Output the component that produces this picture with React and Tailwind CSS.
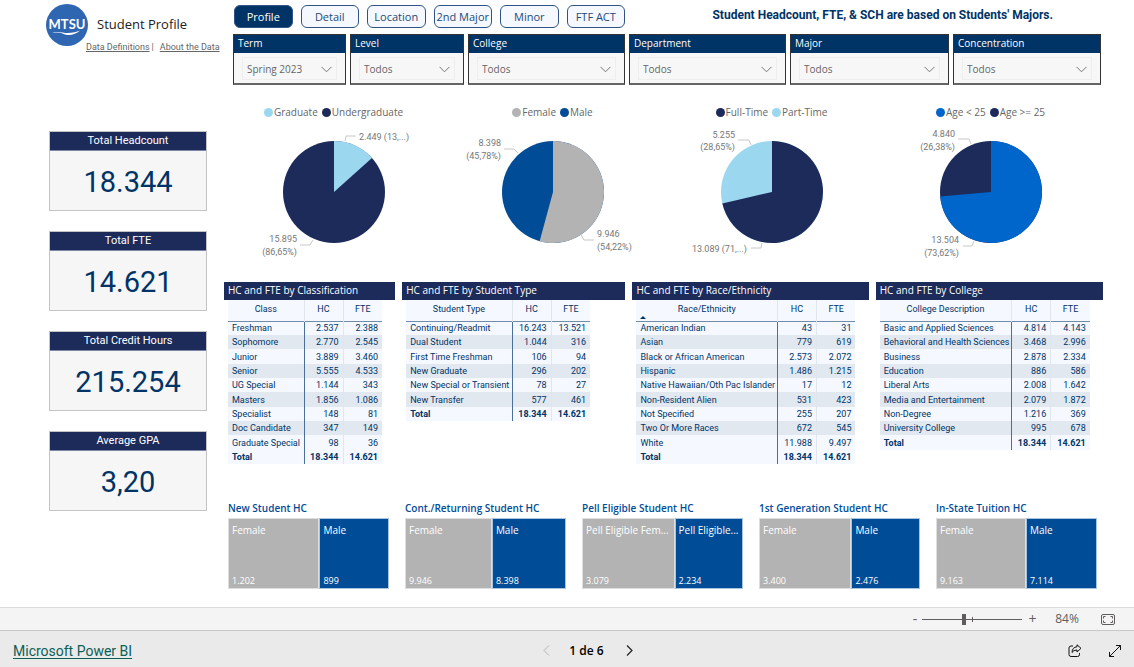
import React, { useState } from 'react';

const tabs = ['Profile', 'Detail', 'Location', '2nd Major', 'Minor', 'FTF ACT'];

const filtros = [
    { label: 'Term', value: 'Spring 2023' },
    { label: 'Level', value: 'Todos' },
    { label: 'College', value: 'Todos' },
    { label: 'Department', value: 'Todos' },
    { label: 'Major', value: 'Todos' },
    { label: 'Concentration', value: 'Todos' }
];

const cards = [
    { label: 'Total Headcount', value: '18.344' },
    { label: 'Total FTE', value: '14.621' },
    { label: 'Total Credit Hours', value: '215.254' },
    { label: 'Average GPA', value: '3,20' }
];

const pies = [
    {
        share: 0.1335,
        slices: [
            { name: 'Graduate', color: '#9bd8ef' },
            { name: 'Undergraduate', color: '#1d2b5b' }
        ],
        lines: ['121,22 122,17 132,17', '89,121 86,126 76,126'],
        texts: [
            { x: 135, y: 21, t: '2.449 (13,...)' },
            { x: 73, y: 123, end: true, t: '15.895' },
            { x: 73, y: 136, end: true, t: '(86,65%)' }
        ]
    },
    {
        share: 0.5422,
        slices: [
            { name: 'Female', color: '#b3b3b3' },
            { name: 'Male', color: '#004c97' }
        ],
        lines: ['75,34 71,30 61,30', '138,116 141,121 151,121'],
        texts: [
            { x: 58, y: 27, end: true, t: '8.398' },
            { x: 58, y: 40, end: true, t: '(45,78%)' },
            { x: 154, y: 118, t: '9.946' },
            { x: 154, y: 131, t: '(54,22%)' }
        ]
    },
    {
        share: 0.7135,
        slices: [
            { name: 'Full-Time', color: '#1d2b5b' },
            { name: 'Part-Time', color: '#9bd8ef' }
        ],
        lines: ['89,26 87,21 76,21', '100,124 99,129 89,129'],
        texts: [
            { x: 73, y: 19, end: true, t: '5.255' },
            { x: 73, y: 31, end: true, t: '(28,65%)' },
            { x: 85, y: 133, end: true, t: '13.089 (71,...)' }
        ]
    },
    {
        share: 0.7362,
        slices: [
            { name: 'Age < 25', color: '#0066cc' },
            { name: 'Age >= 25', color: '#1d2b5b' }
        ],
        lines: ['90,25 88,20 77,20', '93,122 91,127 82,127'],
        texts: [
            { x: 74, y: 18, end: true, t: '4.840' },
            { x: 74, y: 31, end: true, t: '(26,38%)' },
            { x: 78, y: 124, end: true, t: '13.504' },
            { x: 78, y: 137, end: true, t: '(73,62%)' }
        ]
    }
];

const tabelas = [
    {
        titulo: 'HC and FTE by Classification',
        coluna: 'Class',
        largura: 'w-[154px]',
        linhas: [
            ['Freshman', '2.537', '2.388'],
            ['Sophomore', '2.770', '2.545'],
            ['Junior', '3.889', '3.460'],
            ['Senior', '5.555', '4.533'],
            ['UG Special', '1.144', '343'],
            ['Masters', '1.856', '1.086'],
            ['Specialist', '148', '81'],
            ['Doc Candidate', '347', '149'],
            ['Graduate Special', '98', '36']
        ]
    },
    {
        titulo: 'HC and FTE by Student Type',
        coluna: 'Student Type',
        largura: 'w-[184px]',
        linhas: [
            ['Continuing/Readmit', '16.243', '13.521'],
            ['Dual Student', '1.044', '316'],
            ['First Time Freshman', '106', '94'],
            ['New Graduate', '296', '202'],
            ['New Special or Transient', '78', '27'],
            ['New Transfer', '577', '461']
        ]
    },
    {
        titulo: 'HC and FTE by Race/Ethnicity',
        coluna: 'Race/Ethnicity',
        ordenada: true,
        largura: 'w-[219px]',
        linhas: [
            ['American Indian', '43', '31'],
            ['Asian', '779', '619'],
            ['Black or African American', '2.573', '2.072'],
            ['Hispanic', '1.486', '1.215'],
            ['Native Hawaiian/Oth Pac Islander', '17', '12'],
            ['Non-Resident Alien', '531', '423'],
            ['Not Specified', '255', '207'],
            ['Two Or More Races', '672', '545'],
            ['White', '11.988', '9.497']
        ]
    },
    {
        titulo: 'HC and FTE by College',
        coluna: 'College Description',
        largura: 'w-[210px]',
        linhas: [
            ['Basic and Applied Sciences', '4.814', '4.143'],
            ['Behavioral and Health Sciences', '3.468', '2.996'],
            ['Business', '2.878', '2.334'],
            ['Education', '886', '586'],
            ['Liberal Arts', '2.008', '1.642'],
            ['Media and Entertainment', '2.079', '1.872'],
            ['Non-Degree', '1.216', '369'],
            ['University College', '995', '678']
        ]
    }
];

const treemaps = [
    { titulo: 'New Student HC', a: ['Female', 1202], b: ['Male', 899] },
    { titulo: 'Cont./Returning Student HC', a: ['Female', 9946], b: ['Male', 8398] },
    { titulo: 'Pell Eligible Student HC', a: ['Pell Eligible Fem...', 3079], b: ['Pell Eligible...', 2234] },
    { titulo: '1st Generation Student HC', a: ['Female', 3400], b: ['Male', 2476] },
    { titulo: 'In-State Tuition HC', a: ['Female', 9163], b: ['Male', 7114] }
];

const formatar = (n) => String(n).replace(/(\d)(\d{3})$/, '$1.$2');

function App() {
    const [ativa, setAtiva] = useState('Profile');

    return (
        <div className="min-h-screen flex flex-col bg-white font-['Open_Sans',sans-serif] text-[#003366]">
            <div className="flex-1 flex pr-[31px] pb-[18px]">
                <Lateral />
                <main className="flex-1 min-w-0 pt-[5px]">
                    <div className="flex items-center pl-[10px]">
                        <nav className="grid grid-cols-6 gap-2 w-[391px] shrink-0">
                            {tabs.map(t => (
                                <button
                                    key={t}
                                    onClick={() => setAtiva(t)}
                                    className={`h-[23px] rounded-[6px] border border-[#2f5485] text-[11px] leading-[14px] whitespace-nowrap ${
                                        t === ativa ? 'bg-[#003366] text-white' : 'bg-[#f5f9ff] text-[#1f4a78]'
                                    }`}
                                >
                                    {t}
                                </button>
                            ))}
                        </nav>
                        <h2 className="flex-1 pr-[50px] pb-1 text-right font-['Roboto',sans-serif] text-[12px] leading-[16px] font-bold whitespace-nowrap">
                            Student Headcount, FTE, &amp; SCH are based on Students' Majors.
                        </h2>
                    </div>

                    <div className="mt-[6px] ml-[9px] mr-[2px] grid grid-cols-[113fr_114fr_157fr_157fr_159fr_148fr] gap-1">
                        {filtros.map(f => (
                            <Filtro key={f.label} filtro={f} />
                        ))}
                    </div>

                    <div className="mt-5 pr-[3px] grid grid-cols-4">
                        {pies.map((p, i) => (
                            <Pie key={i} pie={p} />
                        ))}
                    </div>

                    <div className="mt-[13px] min-h-[183px] grid grid-cols-[171fr_223fr_236fr_227fr] items-start gap-[7px]">
                        {tabelas.map(t => (
                            <Tabela key={t.titulo} tabela={t} />
                        ))}
                    </div>

                    <div className="mt-9 pl-1 pr-[6px] grid grid-cols-5 gap-4">
                        {treemaps.map(t => (
                            <Treemap key={t.titulo} mapa={t} />
                        ))}
                    </div>
                </main>
            </div>
            <BarraZoom />
            <Rodape />
        </div>
    );
}

function Lateral() {
    return (
        <aside className="w-[224px] shrink-0">
            <div className="h-[131px] pt-1">
                <div className="flex pl-[46px] gap-[9px]">
                    <svg className="w-[42px] h-[42px] shrink-0" viewBox="0 0 42 42">
                        <circle cx="21" cy="21" r="21" fill="#2f66b1" />
                        <text x="21" y="25" textAnchor="middle" fill="#fff" fontFamily="Lato" fontWeight="700" fontSize="13">
                            MTSU
                        </text>
                        <path d="M6 28.5c5-1 9 0 13 .4 6 .5 11-.6 15-2.4-4 3.600-9 5.200-14 4.200-2.500-.5-4-1.600-6-1.900-2.500-.4-5-.5-8-.3z" fill="#fff" />
                    </svg>
                    <h1 className="pt-[10px] text-[13px] leading-[20px] text-[#222] whitespace-nowrap">Student Profile</h1>
                </div>
                <div className="-mt-[5px] pl-[86px] flex font-['Roboto',sans-serif] text-[9px] leading-[12px] text-[#666] whitespace-nowrap">
                    <a href="#definitions" className="underline">Data Definitions</a>
                    <span className="px-[2px]">|</span>
                    <a href="#about" className="ml-1 underline">About the Data</a>
                </div>
            </div>
            <div className="pl-[49px] pr-[17px] flex flex-col gap-5">
                {cards.map(c => (
                    <section key={c.label} className="h-20 border border-[#c4c4c4] bg-[#f6f6f6] text-center">
                        <h3 className="h-[19px] bg-[#1d2b5b] border-b border-[#7c86a5] font-['Roboto',sans-serif] text-white text-[11px] leading-[17px]">
                            {c.label}
                        </h3>
                        <p className="pt-[13px] font-['Roboto',sans-serif] text-[29px] leading-[36px]">{c.value}</p>
                    </section>
                ))}
            </div>
        </aside>
    );
}

function Filtro({ filtro }) {
    const id = 'filtro-' + filtro.label;

    return (
        <div className="h-[51px] border border-[#333] border-b-2 border-b-[#666] bg-[#f7f7f7]">
            <label htmlFor={id} className="block h-[18px] pl-1 bg-[#003366] text-white text-[10px] leading-[16px]">
                {filtro.label}
            </label>
            <div className="relative mx-2 mt-1">
                <select
                    id={id}
                    defaultValue={filtro.value}
                    className="block appearance-none w-full h-[23px] pl-1 pt-[2px] border border-[#eee] bg-[#f7f7f7] text-[#666] text-[10px]"
                >
                    <option>{filtro.value}</option>
                </select>
                <svg className="absolute right-[5px] top-[9px] w-[11px] h-[7px] pointer-events-none" viewBox="0 0 11 7" fill="none" stroke="#777">
                    <path d="M.5.8l5 5 5-5" />
                </svg>
            </div>
        </div>
    );
}

function Pie({ pie }) {
    const cx = 110;
    const cy = 73;
    const r = 51;
    const ang = pie.share * 2 * Math.PI;
    const x = cx + r * Math.sin(ang);
    const y = cy - r * Math.cos(ang);
    const large = pie.share > 0.5 ? 1 : 0;

    return (
        <div className="flex flex-col items-center">
            <div className="flex gap-1 text-[10px] leading-[14px] text-[#666] whitespace-nowrap">
                {pie.slices.map(s => (
                    <span key={s.name} className="flex items-center gap-px">
                        <span className="size-[9px] rounded-full" style={{ background: s.color }} />
                        {s.name}
                    </span>
                ))}
            </div>
            <svg className="w-[219px] h-[150px]" viewBox="0 0 219 150">
                <circle cx={cx} cy={cy} r={r} fill={pie.slices[1].color} />
                <path d={`M${cx} ${cy}V${cy - r}A${r} ${r} 0 ${large} 1 ${x} ${y}Z`} fill={pie.slices[0].color} />
                {pie.lines.map(l => (
                    <polyline key={l} points={l} fill="none" stroke="#c8c8c8" />
                ))}
                {pie.texts.map(t => (
                    <text
                        key={t.t}
                        x={t.x}
                        y={t.y}
                        textAnchor={t.end ? 'end' : 'start'}
                        className="font-['Roboto',sans-serif] text-[9px]"
                        fill="#777"
                    >
                        {t.t}
                    </text>
                ))}
            </svg>
        </div>
    );
}

function Tabela({ tabela }) {
    const t = tabela;

    return (
        <section>
            <h3 className="h-[18px] pl-1 bg-[#1d2b5b] text-white text-[10px] leading-[16px] whitespace-nowrap">
                {t.titulo}
            </h3>
            <table className={`ml-1 ${t.largura} table-fixed border-collapse font-['Roboto',sans-serif] text-[9px] leading-[12px] whitespace-nowrap`}>
                <thead>
                    <tr className="h-[21px] bg-[#f5f9ff] align-top border-b border-[#6f8cab]">
                        <th className="relative p-0 pt-[3px] font-normal border-r border-[#dfe6ee]">
                            {t.coluna}
                            {t.ordenada && (
                                <span className="absolute left-1 bottom-[2px] border-x-[3px] border-x-transparent border-b-[3px] border-b-[#003366]" />
                            )}
                        </th>
                        <th className="w-[39px] p-0 pt-[3px] font-normal border-r border-[#dfe6ee]">HC</th>
                        <th className="w-[39px] p-0 pt-[3px] font-normal">FTE</th>
                    </tr>
                </thead>
                <tbody>
                    {t.linhas.map(l => (
                        <Linha key={l[0]} linha={l} />
                    ))}
                    <Linha linha={['Total', '18.344', '14.621']} total />
                </tbody>
            </table>
        </section>
    );
}

function Linha({ linha, total }) {
    return (
        <tr className={`h-[14px] nth-[3n]:h-[15px] bg-[#f5f9ff] ${total ? 'font-bold' : 'even:bg-[#e1e8f0]'}`}>
            <td className="p-0 pl-1 border-r border-[#4a6f98]">{linha[0]}</td>
            <td className="p-0 pr-1 text-right border-r border-[#dfe6ee]">{linha[1]}</td>
            <td className="p-0 pr-1 text-right">{linha[2]}</td>
        </tr>
    );
}

function Treemap({ mapa }) {
    return (
        <section className="min-w-0">
            <h3 className="text-[10px] leading-[14px] font-semibold text-[#004c97] whitespace-nowrap">{mapa.titulo}</h3>
            <div className="mt-[3px] h-[71px] flex text-white">
                <Bloco item={mapa.a} cor="bg-[#b3b3b3] border-[#dedede]" />
                <Bloco item={mapa.b} cor="bg-[#004c97] border-[#a9c4de]" />
            </div>
        </section>
    );
}

function Bloco({ item, cor }) {
    return (
        <div
            className={`min-w-0 basis-0 flex flex-col justify-between border pl-[3px] pt-1 pb-[1px] whitespace-nowrap ${cor}`}
            style={{ flexGrow: item[1] }}
        >
            <span className="text-[10px] leading-[14px]">{item[0]}</span>
            <span className="text-[9px] leading-[12px]">{formatar(item[1])}</span>
        </div>
    );
}

function BarraZoom() {
    return (
        <div className="h-[23px] border-t border-[#dcdcdc] bg-[#f4f4f4] flex items-center justify-end pr-[19px] text-[#605e5c]">
            <button aria-label="Zoom out" className="w-[6px] mr-1 text-[14px] leading-[16px]">-</button>
            <div className="relative w-[100px] flex items-center">
                <input
                    type="range"
                    aria-label="Zoom"
                    defaultValue="42"
                    className="w-full h-px appearance-none bg-[#605e5c] [&::-webkit-slider-thumb]:appearance-none [&::-webkit-slider-thumb]:w-1 [&::-webkit-slider-thumb]:h-[11px] [&::-webkit-slider-thumb]:bg-[#605e5c]"
                />
                <span className="absolute left-[50px] w-px h-[5px] bg-[#605e5c] pointer-events-none" />
            </div>
            <button aria-label="Zoom in" className="w-[9px] ml-[6px] text-[14px] leading-[16px]">+</button>
            <span className="w-[46px] ml-[7px] text-center text-[12px] leading-[16px]">84%</span>
            <button aria-label="Fit to page" className="ml-[11px]">
                <svg className="w-[14px] h-[11px]" viewBox="0 0 14 11" fill="none" stroke="#605e5c">
                    <rect x=".5" y=".5" width="13" height="10" rx="1.500" />
                    <path d="M2.500 4.500v-2h2M9.500 2.500h2v2M11.500 6.500v2h-2M4.500 8.500h-2v-2" />
                </svg>
            </button>
        </div>
    );
}

function Rodape() {
    return (
        <footer className="h-[37px] border-t border-[#c8c8c8] bg-[#eaeaea] grid grid-cols-3 items-center px-[13px] pt-[3px] text-black">
            <a href="https://powerbi.microsoft.com" className="justify-self-start font-['Roboto',sans-serif] text-[14px] leading-[18px] text-[#0b5f57] underline underline-offset-2">
                Microsoft Power BI
            </a>
            <div className="flex items-center justify-center pl-[42px] text-[12px] leading-[16px] font-semibold">
                <button aria-label="Previous page" className="mr-[19px]">
                    <svg className="w-[7px] h-[11px]" viewBox="0 0 7 11" fill="none" stroke="#b5b5b5">
                        <path d="M6 .5l-5 5 5 5" />
                    </svg>
                </button>
                1 de 6
                <button aria-label="Next page" className="ml-[22px]">
                    <svg className="w-[7px] h-[11px]" viewBox="0 0 7 11" fill="none" stroke="#222" strokeWidth="1.200">
                        <path d="M1 .5l5 5-5 5" />
                    </svg>
                </button>
            </div>
            <div className="flex items-center justify-end gap-[27px]">
                <button aria-label="Share">
                    <svg className="w-[14px] h-[13px]" viewBox="0 0 14 13" fill="none" stroke="#111" strokeLinejoin="round">
                        <path d="M5 2H3Q1 2 1 4v6.500q0 2 2 2h6.500q2 0 2-2V9" />
                        <path d="M9 .8l4 3.500L9 8V6Q5.500 5.800 4 8.500 4.200 3.200 9 2.800z" />
                    </svg>
                </button>
                <button aria-label="Full screen">
                    <svg className="w-[12px] h-[12px]" viewBox="0 0 12 12" fill="none" stroke="#111">
                        <path d="M7 .5h4.500V5M.5 7v4.500H5M11.500.5l-11 11" />
                    </svg>
                </button>
            </div>
        </footer>
    );
}

export default App;
